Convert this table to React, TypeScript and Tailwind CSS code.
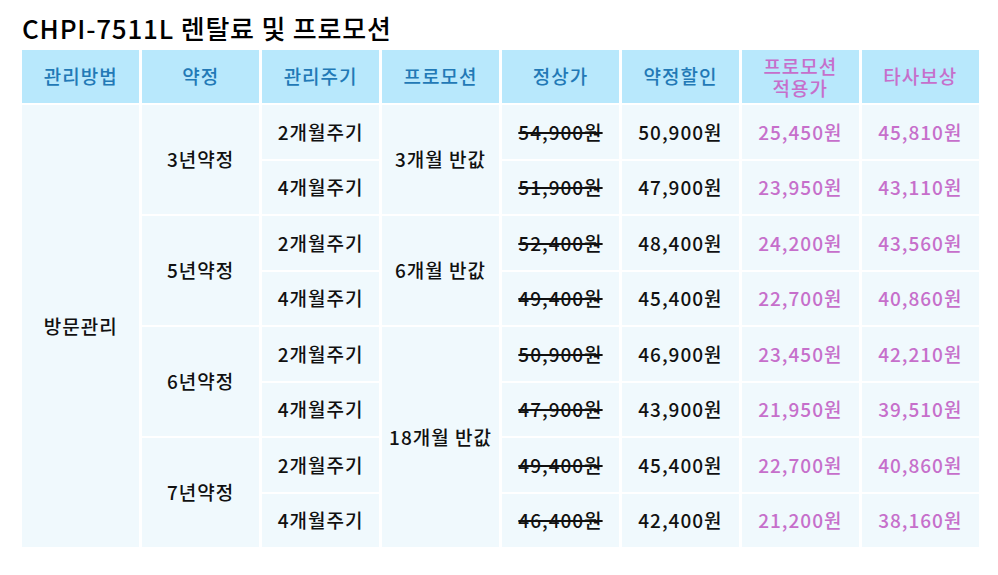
const HEAD = ["관리방법", "약정", "관리주기", "프로모션", "정상가", "약정할인"];

type Row = { cycle: string; base: string; disc: string; promo: string; comp: string };

const ROWS: Row[] = [
  { cycle: "2개월주기", base: "54,900원", disc: "50,900원", promo: "25,450원", comp: "45,810원" },
  { cycle: "4개월주기", base: "51,900원", disc: "47,900원", promo: "23,950원", comp: "43,110원" },
  { cycle: "2개월주기", base: "52,400원", disc: "48,400원", promo: "24,200원", comp: "43,560원" },
  { cycle: "4개월주기", base: "49,400원", disc: "45,400원", promo: "22,700원", comp: "40,860원" },
  { cycle: "2개월주기", base: "50,900원", disc: "46,900원", promo: "23,450원", comp: "42,210원" },
  { cycle: "4개월주기", base: "47,900원", disc: "43,900원", promo: "21,950원", comp: "39,510원" },
  { cycle: "2개월주기", base: "49,400원", disc: "45,400원", promo: "22,700원", comp: "40,860원" },
  { cycle: "4개월주기", base: "46,400원", disc: "42,400원", promo: "21,200원", comp: "38,160원" },
];

const TERMS = ["3년약정", "5년약정", "6년약정", "7년약정"];

const head =
  "flex items-center justify-center bg-[#b8e8fc] text-[19px] font-medium tracking-[1px] text-[#2279b6]";
const cell =
  "flex items-center justify-center bg-[#f0f9fd] text-[19px] font-medium tracking-[1px] text-[#111]";

export default function App() {
  return (
    <div
      className="h-[575px] w-[998px] bg-white px-[22px] pt-[11px]"
      style={{ fontFamily: '"Noto Sans CJK KR", "Noto Sans", sans-serif' }}
    >
      <h1 className="h-[39px] text-[26px] font-medium leading-[34px] tracking-[0.8px] text-black">
        CHPI-7511L 렌탈료 및 프로모션
      </h1>
      <div className="grid w-[957px] grid-cols-8 grid-rows-[53px_repeat(8,53.5px)] gap-x-[2.5px] gap-y-[2px] bg-white">
        {HEAD.map((h) => (
          <div key={h} className={head}>
            {h}
          </div>
        ))}
        <div className={head + " flex-col leading-[22px] text-[#c66fcb]"}>
          <span>프로모션</span>
          <span>적용가</span>
        </div>
        <div className={head + " text-[#c66fcb]"}>타사보상</div>

        <div className={cell + " row-span-8 col-start-1 row-start-2"}>방문관리</div>
        {TERMS.map((t, i) => (
          <div
            key={t}
            className={cell + " col-start-2 row-span-2"}
            style={{ gridRowStart: 2 + i * 2 }}
          >
            {t}
          </div>
        ))}
        <div className={cell + " col-start-4 row-start-2 row-span-2"}>3개월 반값</div>
        <div className={cell + " col-start-4 row-start-4 row-span-2"}>6개월 반값</div>
        <div className={cell + " col-start-4 row-start-6 row-span-4"}>18개월 반값</div>

        {ROWS.map((r, i) => (
          <div key={i} className="contents">
            <div className={cell + " col-start-3"} style={{ gridRowStart: 2 + i }}>
              {r.cycle}
            </div>
            <div className={cell + " col-start-5"} style={{ gridRowStart: 2 + i }}>
              <span className="line-through decoration-[1.5px]">{r.base}</span>
            </div>
            <div className={cell + " col-start-6"} style={{ gridRowStart: 2 + i }}>
              {r.disc}
            </div>
            <div className={cell + " col-start-7 text-[#c66fcb]"} style={{ gridRowStart: 2 + i }}>
              {r.promo}
            </div>
            <div className={cell + " col-start-8 text-[#c66fcb]"} style={{ gridRowStart: 2 + i }}>
              {r.comp}
            </div>
          </div>
        ))}
      </div>
    </div>
  );
}
